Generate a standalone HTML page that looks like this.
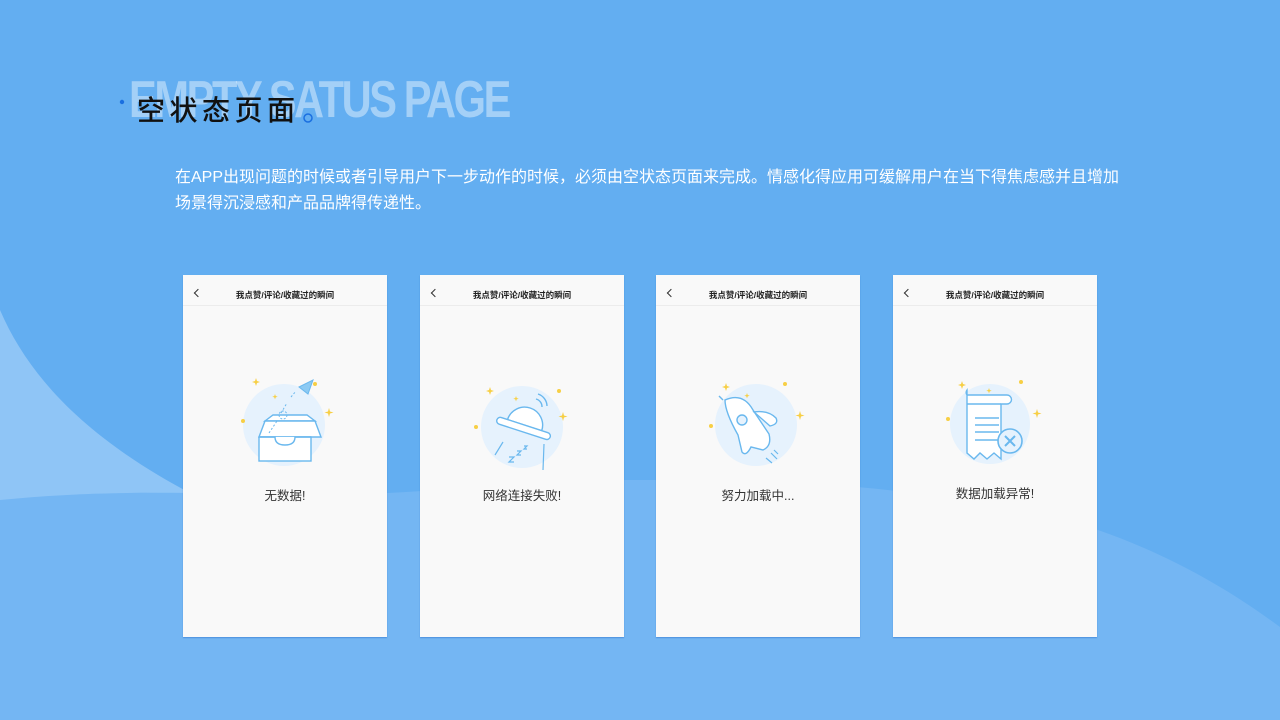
<!DOCTYPE html>
<html><head><meta charset="utf-8"><style>
*{margin:0;padding:0;box-sizing:border-box}
body{width:1280px;height:720px;overflow:hidden;position:relative;background:#63aef1;font-family:"Liberation Sans","Noto Sans CJK SC",sans-serif}
svg.bg{position:absolute;left:0;top:0}
.en{position:absolute;left:129px;top:70px;font-size:52px;font-weight:bold;color:rgba(255,255,255,0.42);letter-spacing:-3px;white-space:nowrap;transform:scaleX(0.8);transform-origin:0 0}
.cn{position:absolute;left:137px;top:89px;font-size:28px;color:#111;letter-spacing:4.5px;white-space:nowrap;font-weight:500}
.desc{position:absolute;left:175px;top:165px;font-size:16px;line-height:26px;color:#fff;white-space:nowrap}
.card{position:absolute;top:275px;width:204px;height:362px;background:#f9f9f9;box-shadow:0 1px 1px rgba(40,110,200,.5)}
.hd{position:absolute;top:0;left:0;right:0;height:31px;border-bottom:1px solid #ececec;text-align:center;font-size:8.5px;line-height:40px;color:#222;font-weight:bold}
.bk{position:absolute;left:12px;top:15px;width:6px;height:6px;border-left:1.2px solid #333;border-bottom:1.2px solid #333;transform:rotate(45deg)}
.card svg{position:absolute;left:52px;top:100px}
.lb{position:absolute;left:0;right:0;top:210px;text-align:center;font-size:12.5px;color:#333}
</style></head><body>
<svg class="bg" width="1280" height="720">
<path d="M0 497 C150 490 300 492 388 493 C480 488 560 480 620 480 C720 480 800 482 857 487 C950 495 1030 510 1098 530 C1170 555 1230 590 1280 627 L1280 720 L0 720Z" fill="#74b6f3"/>
<path d="M0 310 C30 380 90 440 190 493 C120 492 60 494 0 500Z" fill="#8fc5f6"/>
</svg>
<div class="en">EMPTY SATUS PAGE</div>
<div class="cn">空状态页面</div>
<svg class="bg" width="400" height="140"><circle cx="122" cy="102" r="2.2" fill="#1a6fe0"/><circle cx="308" cy="118" r="4" fill="none" stroke="#1a6fe0" stroke-width="1.5"/></svg>
<div class="desc">在APP出现问题的时候或者引导用户下一步动作的时候，必须由空状态页面来完成。情感化得应用可缓解用户在当下得焦虑感并且增加<br>场景得沉浸感和产品品牌得传递性。</div>

<div class="card" style="left:183px"><div class="hd"><i class="bk"></i>我点赞/评论/收藏过的瞬间</div>
<svg width="100" height="100" viewBox="0 0 100 100"><circle cx="49" cy="50" r="41" fill="#e6f2fd"/>
<g fill="#f7cf45"><circle cx="80" cy="9" r="2"/><circle cx="8" cy="46" r="2"/><path d="M21 3l1 3 3 1-3 1-1 3-1-3-3-1 3-1z"/><path d="M40 19l.7 2 2 .7-2 .7-.7 2-.7-2-2-.7 2-.7z"/><path d="M94 33l1 3.5 3.5 1-3.5 1-1 3.5-1-3.5-3.5-1 3.5-1z"/></g>
<g fill="#fff" stroke="#6ab8ee" stroke-width="1.4"><path d="M30 46h50l-8-6H38z"/><path d="M24 62l6-16h50l6 16z"/><rect x="24" y="62" width="52" height="24"/><path d="M24 62h16q0 8 10 8t10-8h16"/></g>
<path d="M64 12l14-7-5 14z" fill="#8ccaf3" stroke="#6ab8ee"/><path d="M34 58l8-12m4-8l6-10m4-6l5-6" stroke="#6ab8ee" stroke-dasharray="2 2" fill="none"/><circle cx="48" cy="40" r="4" fill="none" stroke="#6ab8ee" stroke-dasharray="2 1.5"/></svg>
<div class="lb">无数据!</div></div>

<div class="card" style="left:420px"><div class="hd"><i class="bk"></i>我点赞/评论/收藏过的瞬间</div>
<svg width="100" height="100" viewBox="0 0 100 100"><circle cx="50" cy="52" r="41" fill="#e6f2fd"/>
<g fill="#f7cf45"><circle cx="87" cy="16" r="2"/><circle cx="4" cy="52" r="2"/><path d="M18 12l1 3 3 1-3 1-1 3-1-3-3-1 3-1z"/><path d="M44 21l.7 2 2 .7-2 .7-.7 2-.7-2-2-.7 2-.7z"/><path d="M91 37l1 3.5 3.5 1-3.5 1-1 3.5-1-3.5-3.5-1 3.5-1z"/></g>
<g transform="rotate(18 52 52)"><path d="M34 50a18 18 0 0 1 36 0z" fill="#fff" stroke="#6ab8ee" stroke-width="1.4"/><rect x="24" y="50" width="56" height="7" rx="3.5" fill="#fff" stroke="#6ab8ee" stroke-width="1.4"/></g>
<path d="M64 24a8 8 0 0 1 6 8M66 19a13 13 0 0 1 9 12" stroke="#6ab8ee" stroke-width="1.4" fill="none"/>
<path d="M23 80l8-13M71 95l1-26" stroke="#6ab8ee" stroke-width="1.2"/><path d="M37 82h5l-5 5h5M45 76h4l-4 4h4M52 71h3l-3 3h3" stroke="#6ab8ee" stroke-width="1.2" fill="none"/></svg>
<div class="lb">网络连接失败!</div></div>

<div class="card" style="left:656px"><div class="hd"><i class="bk"></i>我点赞/评论/收藏过的瞬间</div>
<svg width="100" height="100" viewBox="0 0 100 100"><circle cx="48" cy="50" r="41" fill="#e6f2fd"/>
<g fill="#f7cf45"><circle cx="77" cy="9" r="2"/><circle cx="3" cy="51" r="2"/><path d="M18 8l1 3 3 1-3 1-1 3-1-3-3-1 3-1z"/><path d="M39 18l.7 2 2 .7-2 .7-.7 2-.7-2-2-.7 2-.7z"/><path d="M92 36l1 3.5 3.5 1-3.5 1-1 3.5-1-3.5-3.5-1 3.5-1z"/></g>
<path d="M17 25q18-8 28 10l16 24q3 12-6 16l-12-3q-5 10-9 5l-4-17q-13-23-13-35z" fill="#fff" stroke="#6ab8ee" stroke-width="1.4"/>
<path d="M46 37q14-2 22 6q3 6-6 8z" fill="#fff" stroke="#6ab8ee" stroke-width="1.4"/>
<circle cx="34" cy="45" r="5" fill="#e6f2fd" stroke="#6ab8ee" stroke-width="1.4"/><path d="M15 25l-4-4" stroke="#6ab8ee" stroke-width="1.4"/>
<path d="M58 83l6 5M63 78l6 6M66 75l4 4" stroke="#6ab8ee" stroke-width="1.2"/></svg>
<div class="lb">努力加载中...</div></div>

<div class="card" style="left:893px"><div class="hd"><i class="bk"></i>我点赞/评论/收藏过的瞬间</div>
<svg width="100" height="100" viewBox="0 0 100 100"><circle cx="45" cy="49" r="40" fill="#e6f2fd"/>
<g fill="#f7cf45"><circle cx="76" cy="7" r="2"/><circle cx="3" cy="44" r="2"/><path d="M17 6l1 3 3 1-3 1-1 3-1-3-3-1 3-1z"/><path d="M44 13l.7 2 2 .7-2 .7-.7 2-.7-2-2-.7 2-.7z"/><path d="M92 34l1 3.5 3.5 1-3.5 1-1 3.5-1-3.5-3.5-1 3.5-1z"/></g>
<path d="M22 20h40a4 4 0 0 1 0 9h-6v55l-7-6-7 6-7-6-6 6-7-6v-58a4 4 0 0 1 0-5z" fill="#fff" stroke="#6ab8ee" stroke-width="1.4"/>
<path d="M22 29h34M30 43h24M30 50h24M30 57h24M30 65h24" stroke="#6ab8ee" stroke-width="1.4"/>
<circle cx="65" cy="66" r="12" fill="#e6f2fd" stroke="#6ab8ee" stroke-width="1.6"/><path d="M60 61l10 10M70 61l-10 10" stroke="#6ab8ee" stroke-width="2"/></svg>
<div class="lb" style="top:208px">数据加载异常!</div></div>
</body></html>
